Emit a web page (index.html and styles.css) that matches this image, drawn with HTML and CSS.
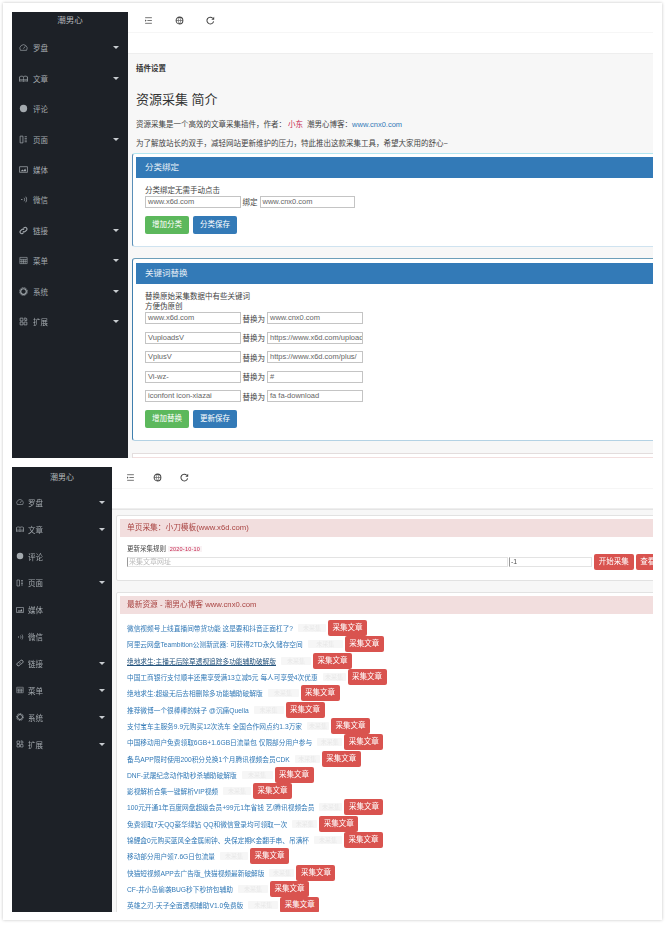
FILE: index.html
```html
<!DOCTYPE html>
<html lang="zh-CN">
<head>
<meta charset="utf-8">
<title>资源采集</title>
<link rel="stylesheet" href="styles.css">
</head>
<body>
<svg class="defs" width="0" height="0" aria-hidden="true">
  <symbol id="i-gauge" viewBox="0 0 16 16"><path d="M2.5 13a6.5 6.5 0 1 1 11 0z" fill="none" stroke="currentColor" stroke-width="1.2"/><path d="M8 10l3-4" stroke="currentColor" stroke-width="1.2"/></symbol>
  <symbol id="i-book" viewBox="0 0 16 16"><path d="M1 13V5c2.500-1.500 5-1.500 7 0 2-1.500 4.500-1.500 7 0v8c-2.500-1-5-1-7 0-2-1-4.500-1-7 0z" fill="none" stroke="currentColor" stroke-width="1.4"/><path d="M8 5v8M1 10h14" stroke="currentColor"/></symbol>
  <symbol id="i-comment" viewBox="0 0 16 16"><circle cx="8" cy="8" r="6.500" fill="currentColor"/></symbol>
  <symbol id="i-page" viewBox="0 0 16 16"><path d="M2 2h5v12H2zM10 3h4M10 6h4M10 9h4M10 12h4" fill="none" stroke="currentColor" stroke-width="1.3"/></symbol>
  <symbol id="i-image" viewBox="0 0 16 16"><path d="M1 3h14v10H1z" fill="none" stroke="currentColor" stroke-width="1.3"/><path d="M3 11l3-3 2 2 3-4 2 5z" fill="currentColor"/></symbol>
  <symbol id="i-sound" viewBox="0 0 16 16"><path d="M4 7h2v2H4z" fill="currentColor"/><path d="M9 5c1.300 1.800 1.300 4.200 0 6M12 3c2 3 2 7 0 10" fill="none" stroke="currentColor" stroke-width="1.3"/></symbol>
  <symbol id="i-link" viewBox="0 0 16 16"><path d="M7 9.500a3 3 0 0 0 4.200 0l2.300-2.300a3 3 0 0 0-4.200-4.200L8 4.300M9 6.500a3 3 0 0 0-4.200 0L2.500 8.800A3 3 0 0 0 6.700 13L8 11.700" fill="none" stroke="currentColor" stroke-width="2"/></symbol>
  <symbol id="i-table" viewBox="0 0 16 16"><path d="M1.500 2.500h13v11h-13zM1.500 6h13M5 6v7.500M8 6v7.500M11 6v7.500M1.500 9.500h13" fill="none" stroke="currentColor" stroke-width="1.100"/></symbol>
  <symbol id="i-gear" viewBox="0 0 16 16"><circle cx="8" cy="8" r="5" fill="none" stroke="currentColor" stroke-width="2"/><circle cx="8" cy="8" r="7" fill="none" stroke="currentColor" stroke-width="1.500" stroke-dasharray="2 1.600"/></symbol>
  <symbol id="i-grid" viewBox="0 0 16 16"><path d="M2 2h5v5H2zM2 9h5v5H2zM9 9h5v5H9zM10 1.500l3.500 1 .5 3.500-3.500.5z" fill="none" stroke="currentColor" stroke-width="1.300"/></symbol>
  <symbol id="i-menu" viewBox="0 0 16 16"><path d="M2 3h12M6 8h8M2 13h12" stroke="currentColor" stroke-width="1.300"/><path d="M2 6l2.500 2L2 10z" fill="currentColor"/></symbol>
  <symbol id="i-globe" viewBox="0 0 16 16"><circle cx="8" cy="8" r="6" fill="none" stroke="currentColor" stroke-width="1.800"/><path d="M8 2c-3 4-3 8 0 12M8 2c3 4 3 8 0 12M2 8h12" fill="none" stroke="currentColor"/></symbol>
  <symbol id="i-refresh" viewBox="0 0 16 16"><path d="M13.500 9.500A6 6 0 1 1 12 4" fill="none" stroke="currentColor" stroke-width="1.800"/><path d="M14.500 1.500v5h-5z" fill="currentColor"/></symbol>
</svg>

<div class="frame">
  <section class="screen screen-a">
    <aside class="side">
      <div class="brand">潮男心</div>
      <nav class="nav">
        <div class="item"><svg class="ico"><use href="#i-gauge"/></svg><span>罗盘</span><i class="caret"></i></div>
        <div class="item"><svg class="ico"><use href="#i-book"/></svg><span>文章</span><i class="caret"></i></div>
        <div class="item"><svg class="ico"><use href="#i-comment"/></svg><span>评论</span></div>
        <div class="item"><svg class="ico"><use href="#i-page"/></svg><span>页面</span><i class="caret"></i></div>
        <div class="item"><svg class="ico"><use href="#i-image"/></svg><span>媒体</span></div>
        <div class="item"><svg class="ico"><use href="#i-sound"/></svg><span>微信</span></div>
        <div class="item"><svg class="ico"><use href="#i-link"/></svg><span>链接</span><i class="caret"></i></div>
        <div class="item"><svg class="ico"><use href="#i-table"/></svg><span>菜单</span><i class="caret"></i></div>
        <div class="item"><svg class="ico"><use href="#i-gear"/></svg><span>系统</span><i class="caret"></i></div>
        <div class="item"><svg class="ico"><use href="#i-grid"/></svg><span>扩展</span><i class="caret"></i></div>
      </nav>
    </aside>
    <main class="main">
      <header class="topbar">
        <svg class="tool"><use href="#i-menu"/></svg>
        <svg class="tool"><use href="#i-globe"/></svg>
        <svg class="tool"><use href="#i-refresh"/></svg>
      </header>
      <div class="subbar"></div>
      <div class="content">
        <div class="crumb">插件设置</div>
        <h1 class="title">资源采集 简介</h1>
        <p class="intro">资源采集是一个高效的文章采集插件，作者：<span class="author">小东</span> 潮男心博客：<a class="site">www.cnx0.com</a></p>
        <p class="intro intro-b">为了解放站长的双手，减轻网站更新维护的压力，特此推出这款采集工具，希望大家用的舒心~</p>

        <div class="panel panel-a">
          <div class="panel-head">分类绑定</div>
          <div class="panel-body">
            <div class="hint">分类绑定无需手动点击</div>
            <div class="pair"><span class="field">www.x6d.com</span><span class="lab lab-short">绑定</span><span class="field">www.cnx0.com</span></div>
            <div class="btns"><span class="btn green">增加分类</span><span class="btn blue">分类保存</span></div>
          </div>
        </div>

        <div class="panel panel-b">
          <div class="panel-head">关键词替换</div>
          <div class="panel-body">
            <div class="hint">替换原始采集数据中有些关键词</div>
            <div class="hint">方便伪原创</div>
            <div class="pair"><span class="field">www.x6d.com</span><span class="lab">替换为</span><span class="field">www.cnx0.com</span></div>
            <div class="pair"><span class="field">VuploadsV</span><span class="lab">替换为</span><span class="field">https://www.x6d.com/upload</span></div>
            <div class="pair"><span class="field">VplusV</span><span class="lab">替换为</span><span class="field">https://www.x6d.com/plus/</span></div>
            <div class="pair"><span class="field">Vi-wz-</span><span class="lab">替换为</span><span class="field">#</span></div>
            <div class="pair"><span class="field">iconfont icon-xiazai</span><span class="lab">替换为</span><span class="field">fa fa-download</span></div>
            <div class="btns btns-b"><span class="btn green">增加替换</span><span class="btn blue">更新保存</span></div>
          </div>
        </div>
        <div class="panel-next"></div>
      </div>
    </main>
  </section>

  <section class="screen screen-b">
    <aside class="side">
      <div class="brand">潮男心</div>
      <nav class="nav">
        <div class="item"><svg class="ico"><use href="#i-gauge"/></svg><span>罗盘</span><i class="caret"></i></div>
        <div class="item"><svg class="ico"><use href="#i-book"/></svg><span>文章</span><i class="caret"></i></div>
        <div class="item"><svg class="ico"><use href="#i-comment"/></svg><span>评论</span></div>
        <div class="item"><svg class="ico"><use href="#i-page"/></svg><span>页面</span><i class="caret"></i></div>
        <div class="item"><svg class="ico"><use href="#i-image"/></svg><span>媒体</span></div>
        <div class="item"><svg class="ico"><use href="#i-sound"/></svg><span>微信</span></div>
        <div class="item"><svg class="ico"><use href="#i-link"/></svg><span>链接</span><i class="caret"></i></div>
        <div class="item"><svg class="ico"><use href="#i-table"/></svg><span>菜单</span><i class="caret"></i></div>
        <div class="item"><svg class="ico"><use href="#i-gear"/></svg><span>系统</span><i class="caret"></i></div>
        <div class="item"><svg class="ico"><use href="#i-grid"/></svg><span>扩展</span><i class="caret"></i></div>
      </nav>
    </aside>
    <main class="main">
      <header class="topbar">
        <svg class="tool"><use href="#i-menu"/></svg>
        <svg class="tool"><use href="#i-globe"/></svg>
        <svg class="tool"><use href="#i-refresh"/></svg>
      </header>
      <div class="subbar"></div>
      <div class="content">
        <div class="card card-a">
          <div class="card-head">单页采集：小刀模板(www.x6d.com)</div>
          <div class="rule">更新采集规则 <span class="date">2020-10-10</span></div>
          <div class="collect">
            <span class="inp inp-url">采集文章网址</span><span class="inp inp-num">-1</span>
            <span class="btn red btn-start">开始采集</span><span class="btn red btn-start">查看采集</span>
          </div>
        </div>
        <div class="card card-b">
          <div class="card-head">最新资源 - 潮男心博客 www.cnx0.com</div>
          <ul class="list">
            <li class="row"><a class="ttl">微信视频号上线直播间带货功能 这是要和抖音正面杠了?</a><span class="tag t28">未采集</span><span class="btn red">采集文章</span></li>
            <li class="row"><a class="ttl">阿里云网盘Teambition公测新武器: 可获得2TD永久储存空间</a><span class="tag t35">未采集</span><span class="btn red">采集文章</span></li>
            <li class="row"><a class="ttl ttl-hover">绝地求生:主播无后除草透视追踪多功能辅助破解版</a><span class="tag t30">未采集</span><span class="btn red">采集文章</span></li>
            <li class="row"><a class="ttl">中国工商银行支付顺丰还需享受满13立减5元 每人可享受4次优惠</a><span class="tag t23">未采集</span><span class="btn red">采集文章</span></li>
            <li class="row"><a class="ttl">绝地求生:超级无后去相删除多功能辅助破解版</a><span class="tag t31">未采集</span><span class="btn red">采集文章</span></li>
            <li class="row"><a class="ttl">推荐微博一个很棒棒的妹子 @沉痛Quella</a><span class="tag t30">未采集</span><span class="btn red">采集文章</span></li>
            <li class="row"><a class="ttl">支付宝车主服务9.9元购买12次洗车 全国合作网点约1.3万家</a><span class="tag t22">未采集</span><span class="btn red">采集文章</span></li>
            <li class="row"><a class="ttl">中国移动用户免费领取6GB+1.6GB日流量包 仅限部分用户参与</a><span class="tag t25">未采集</span><span class="btn red">采集文章</span></li>
            <li class="row"><a class="ttl">备鸟APP限时使用200积分兑换1个月腾讯视频会员CDK</a><span class="tag t25">未采集</span><span class="btn red">采集文章</span></li>
            <li class="row"><a class="ttl">DNF-武屠纪念动作助秒杀辅助破解版</a><span class="tag t31">未采集</span><span class="btn red">采集文章</span></li>
            <li class="row"><a class="ttl">影视解析合集一键解析VIP视频</a><span class="tag t28">未采集</span><span class="btn red">采集文章</span></li>
            <li class="row"><a class="ttl">100元开通1年百度网盘超级会员+99元1年省钱 艺/腾讯视频会员</a><span class="tag t23">未采集</span><span class="btn red">采集文章</span></li>
            <li class="row"><a class="ttl">免费领取7天QQ豪华绿钻 QQ和微信登录均可领取一次</a><span class="tag t25">未采集</span><span class="btn red">采集文章</span></li>
            <li class="row"><a class="ttl">锦鲤盒0元购买蓝风全金属闹钟、央保定期K金翻手串、吊满杯</a><span class="tag t28">未采集</span><span class="btn red">采集文章</span></li>
            <li class="row"><a class="ttl">移动部分用户领7.6G日包流量</a><span class="tag t28">未采集</span><span class="btn red">采集文章</span></li>
            <li class="row"><a class="ttl">快猫短视频APP去广告版_快猫视频最新破解版</a><span class="tag t25">未采集</span><span class="btn red">采集文章</span></li>
            <li class="row"><a class="ttl">CF-井小岛偷袭BUG秒下秒挤包辅助</a><span class="tag t30">未采集</span><span class="btn red">采集文章</span></li>
            <li class="row"><a class="ttl">英雄之刃-天子全面透视辅助V1.0免费版</a><span class="tag t30">未采集</span><span class="btn red">采集文章</span></li>
          </ul>
        </div>
      </div>
    </main>
  </section>
</div>
</body>
</html>
```
FILE: styles.css
```css
* { box-sizing: border-box; }
html, body { margin: 0; padding: 0; background: #fff; }
body {
  width: 665px; height: 925px; overflow: hidden;
  font-family: "Liberation Sans", "Noto Sans CJK SC", sans-serif;
  color: #333;
}
.defs { position: absolute; }
.frame {
  width: 659px; height: 917px; margin: 3px 0 0 3px;
  padding: 9px 9px 0 9px;
  background: #fff;
  box-shadow: 0 0 3px rgba(0, 0, 0, .24);
  display: flex; flex-direction: column; gap: 9px;
  filter: blur(.45px);
}
.screen { display: flex; width: 641px; overflow: hidden; flex: none; }
.screen-a { height: 446px; }
.screen-b { height: 445px; }

/* sidebar */
.side { flex: none; background: #1d2127; color: #a3a9ae; }
.screen-a .side { width: 116px; }
.screen-b .side { width: 100px; }
.brand { text-align: center; color: #b4b8bb; font-size: 8.500px; height: 20.500px; line-height: 17px; }
.screen-b .brand { font-size: 8px; line-height: 22px; }
.item { display: flex; align-items: center; font-size: 7.500px; padding: 0 9px 0 7px; }
.screen-a .item { height: 30.45px; padding-left: 7px; }
.screen-b .item { height: 26.85px; padding-left: 4px; padding-right: 7px; }
.screen-b .nav { padding-top: 1.500px; }
.ico { width: 9px; height: 9px; margin-right: 5px; flex: none; color: #a3a9ae; }
.screen-b .ico { width: 8px; height: 8px; margin-right: 4px; }
.item span { flex: 1; }
.caret { width: 0; height: 0; border-left: 3px solid transparent; border-right: 3px solid transparent; border-top: 3px solid #c8ccd0; }

/* main */
.main { flex: 1; min-width: 0; display: flex; flex-direction: column; overflow: hidden; }
.topbar { height: 21px; flex: none; border-bottom: 1px solid #f6f6f6; display: flex; align-items: center; padding-left: 15px; gap: 22px; }
.screen-a .topbar { padding-left: 16px; padding-bottom: 3px; }
.screen-b .topbar { height: 22px; padding-left: 14px; gap: 18px; }
.tool { width: 9px; height: 9px; color: #444; flex: none; }
.subbar { height: 21px; flex: none; border-bottom: 1px solid #eee; }
.screen-b .subbar { height: 20px; }
.content { flex: 1; background: #f7f7f7; }

/* screen a content */
.screen-a .content { padding: 10px 0 0 4px; }
.crumb { font-size: 7.500px; font-weight: bold; line-height: 10px; color: #333; margin-left: 4px; }
.title { font-size: 13px; font-weight: normal; line-height: 16px; margin: 18px 0 0 4px; color: #333; }
.intro { font-size: 7.500px; line-height: 10px; margin: 12px 0 0 4px; color: #444; white-space: nowrap; }
.intro-b { margin-top: 9px; }
.author { color: #c7254e; margin: 0 2px; }
.site { color: #337ab7; }
.panel { width: 640px; background: #fff; border: 1px solid #8fb7d0; border-radius: 3px; padding: 3px; margin-top: 4px; }
.panel-a { border-top-color: #b3e6f0; border-left-color: #5a8fb8; border-bottom-color: #cfe3f0; height: 94px; }
.panel-b { border-top-color: #6d9fba; border-left-color: #3f7fae; border-bottom-color: #b4d2e4; height: 183px; margin-top: 11px; padding-top: 4px; }
.panel-head { background: #337ab7; color: #e8f0f6; font-size: 8.500px; height: 21px; line-height: 20px; padding-left: 9px; }
.panel-body { padding: 8px 0 0 9px; }
.hint { font-size: 7.500px; line-height: 10px; color: #444; }
.pair { display: flex; align-items: center; font-size: 8px; color: #444; height: 11.500px; }
.panel-b .pair { height: 12px; margin-bottom: 7.500px; }
.field { width: 95.500px; height: 100%; border: 1px solid #c4c4c4; background: #fff; font-size: 7.500px; line-height: 10px; padding-left: 2px; color: #666; white-space: nowrap; overflow: hidden; flex: none; }
.lab { width: 26.500px; text-align: center; font-size: 7.500px; flex: none; }
.lab-short { width: 19px; }
.btns { display: flex; gap: 4px; margin-top: 8px; }
.btns-b { margin-top: 0; }
.btn { display: inline-block; font-size: 7.500px; color: #fff; text-align: center; border-radius: 2px; white-space: nowrap; flex: none; }
.btns .btn { width: 44px; height: 18px; line-height: 18px; }
.green { background: #5cb85c; }
.blue { background: #337ab7; }
.red { background: #d9534f; }
.panel-next { width: 640px; height: 6px; margin-top: 12px; border-top: 1px solid #e3dddd; border-left: 1px solid #e3dddd; background: linear-gradient(#fff 3px, #f2dede 3px); }

/* screen b content */
.screen-b .content { padding: 5px 0 0 4px; border-top: 1px solid #e4e4e4; }
.card { width: 640px; background: #fff; border: 1px solid #e2e2e2; border-radius: 2px; padding: 3px; }
.card-a { height: 66px; }
.card-b { margin-top: 11px; height: 330px; }
.card-head { background: #f2dede; color: #a94442; font-size: 7.700px; height: 18px; line-height: 18px; padding-left: 7px; }
.rule { font-size: 6.500px; line-height: 10px; margin: 7px 0 0 7px; color: #444; }
.date { color: #c7254e; background: #f9f2f4; font-size: 5.500px; padding: 0 2px; letter-spacing: .2px; }
.collect { display: flex; align-items: center; margin: 0 0 0 7px; height: 16px; }
.inp { height: 10px; border: 1px solid #e3e3e3; font-size: 7px; line-height: 8px; padding-left: 1px; flex: none; }
.inp-url { width: 381px; color: #bbb; border-left-color: #999; }
.inp-num { width: 83px; margin-left: 1px; color: #555; border-left-color: #999; }
.btn-start { width: 39.500px; height: 16px; line-height: 16px; margin-left: 2px; }
.list { list-style: none; margin: 6px 0 0 0; padding: 0 0 0 7px; }
.row { display: flex; align-items: center; height: 16.300px; white-space: nowrap; }
.ttl { font-size: 6.700px; color: #337ab7; }
.ttl-hover { color: #23527c; text-decoration: underline; }
.tag { font-size: 6px; color: #e8e8e8; background: #f6f6f6; height: 8px; line-height: 8px; text-align: center; margin: 0 2px 0 5px; border-radius: 1px; flex: none; overflow: hidden; }
.t22 { width: 22px; }
.t23 { width: 23px; }
.t25 { width: 25px; }
.t28 { width: 28px; }
.t30 { width: 30px; }
.t31 { width: 31px; }
.t35 { width: 35px; }
.row .btn { width: 39px; height: 16px; line-height: 16px; }
```
